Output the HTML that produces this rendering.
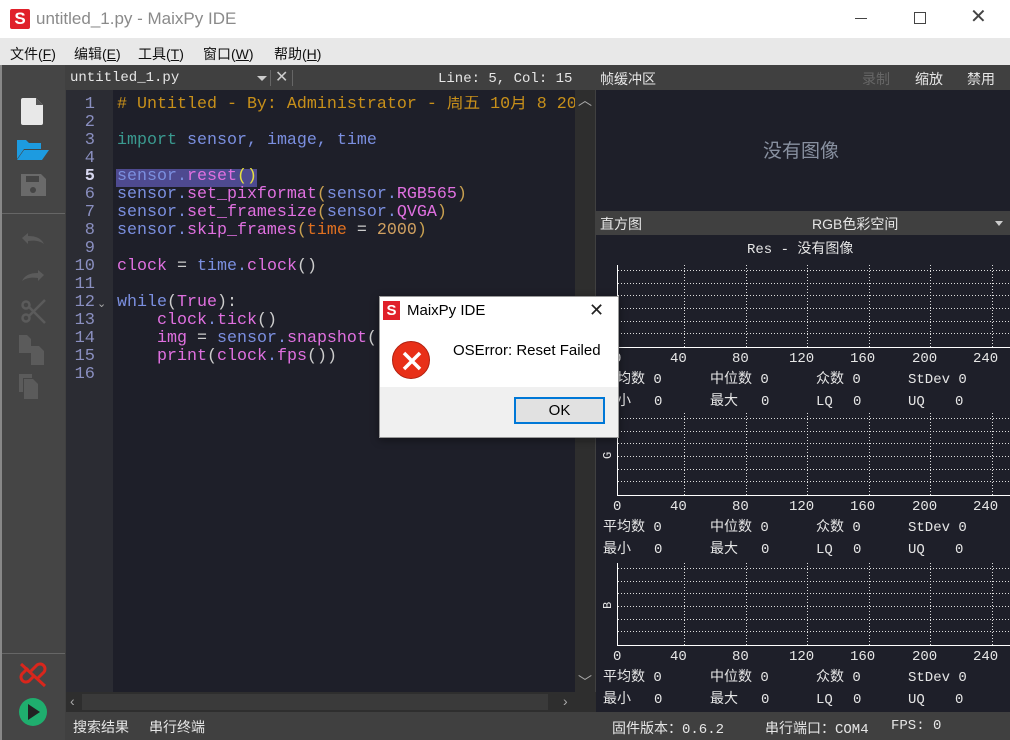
<!DOCTYPE html>
<html><head><meta charset="utf-8"><style>
*{margin:0;padding:0;box-sizing:border-box}
body{width:1010px;height:740px;overflow:hidden;background:#404040;font-family:"Liberation Sans","Noto Sans CJK SC",sans-serif;position:relative}
.a{position:absolute}
.mono{font-family:"Liberation Mono","Noto Sans CJK SC",monospace}
.code div{height:18px;line-height:18px;white-space:pre}
.ln div{height:18px;line-height:18px;text-align:right;padding-right:18px;color:#8a8fc0}
.w{color:#e6e6e6}
</style></head><body>
<!-- title -->
<div class="a" style="left:0;top:0;width:1010px;height:38px;background:#fff"></div>
<div class="a" style="left:10px;top:9px;width:20px;height:20px;background:#e0202a;border-radius:2px;color:#fff;font:bold 17px 'Liberation Sans';text-align:center;line-height:20px">S</div>
<div class="a" style="left:36px;top:9px;font-size:17px;color:#8a8a8a">untitled_1.py - MaixPy IDE</div>
<div class="a" style="left:855px;top:18px;width:12px;height:1px;background:#444"></div>
<div class="a" style="left:914px;top:12px;width:12px;height:12px;border:1px solid #444"></div>
<div class="a" style="left:970px;top:4px;font-size:20px;color:#444">✕</div>
<!-- menu -->
<div class="a" style="left:0;top:38px;width:1010px;height:27px;background:#e8e8e8;font-size:14px;color:#111">
<span class="a" style="left:10px;top:6px">文件(<u>F</u>)</span><span class="a" style="left:74px;top:6px">编辑(<u>E</u>)</span><span class="a" style="left:138px;top:6px">工具(<u>T</u>)</span><span class="a" style="left:203px;top:6px">窗口(<u>W</u>)</span><span class="a" style="left:274px;top:6px">帮助(<u>H</u>)</span></div>
<!-- left toolbar -->
<div class="a" style="left:0;top:65px;width:2px;height:675px;background:#888"></div>
<div class="a" style="left:2px;top:65px;width:63px;height:675px;background:#454545"></div>
<div class="a" style="left:2px;top:213px;width:63px;height:1px;background:#666"></div>
<div class="a" style="left:2px;top:653px;width:63px;height:1px;background:#666"></div>
<svg class="a" style="left:0;top:90px" width="66" height="640" viewBox="0 90 66 640">
<path d="M23 98h13l7 7v18a2 2 0 0 1-2 2H23a2 2 0 0 1-2-2V100a2 2 0 0 1 2-2z" fill="#e8e8e8"/><path d="M36 98v7h7z" fill="#555"/>
<path d="M17 140h9l3 3h12v6H24l-7 10z" fill="#1d9be0"/><path d="M24 150h25l-7 10H17z" fill="#1d9be0"/>
<path d="M21 174h20l5 5v17H21z" fill="#6a6a6a"/><rect x="26" y="176" width="13" height="6" fill="#454545"/><circle cx="33" cy="190" r="3" fill="#454545"/>
<path d="M22 238l6-5v3c8 0 13 2 16 8c-4-3-9-4-16-3v3z" fill="#5b5b5b"/>
<path d="M44 275l-6-5v3c-8 0-13 2-16 8c4-3 9-4 16-3v3z" fill="#5b5b5b"/>
<g stroke="#5b5b5b" stroke-width="2.5" fill="none"><circle cx="26" cy="318" r="3.5"/><circle cx="26" cy="305" r="3.5"/><path d="M29 316l16-16M29 307l16 16"/></g>
<path d="M19 335h8l4 4v14h-12z M31 346h8l5 5v14H31z" fill="#5b5b5b"/>
<path d="M19 374h13v4h-9v14h-4z" fill="#5b5b5b"/><path d="M24 379h9l5 5v15H24z" fill="#5b5b5b"/>
<g stroke="#d9261c" stroke-width="3" fill="none"><path d="M28 668l-6 6a5 5 0 0 0 7 7l6-6M38 678l6-6a5 5 0 0 0-7-7l-6 6M21 664l24 22"/></g>
<circle cx="33" cy="712" r="14" fill="#1fae6e"/><path d="M28 704v16l12-8z" fill="#222"/>
</svg>
<!-- editor tab -->
<div class="a" style="left:66px;top:66px;width:530px;height:24px;background:#404040"></div>
<div class="a mono w" style="left:70px;top:70px;font-size:14px">untitled_1.py</div>
<div class="a" style="left:257px;top:76px;border:5px solid transparent;border-top:5px solid #ccc"></div>
<div class="a" style="left:270px;top:70px;width:1px;height:16px;background:#666"></div>
<div class="a" style="left:275px;top:67px;color:#ccc;font-size:16px">✕</div>
<div class="a" style="left:292px;top:70px;width:1px;height:16px;background:#666"></div>
<div class="a mono w" style="left:438px;top:71px;font-size:14px">Line: 5, Col: 15</div>
<!-- gutter & code -->
<div class="a" style="left:66px;top:90px;width:47px;height:602px;background:#2b2c33"></div>
<div class="a" style="left:113px;top:90px;width:462px;height:602px;background:#1e1f29"></div>
<div class="a" style="left:575px;top:90px;width:20px;height:602px;background:#2e2e2e"></div>
<div class="a" style="left:578px;top:90px;color:#aaa;font-size:14px">︿</div>
<div class="a" style="left:578px;top:672px;color:#aaa;font-size:14px">﹀</div>
<div class="a" style="left:66px;top:692px;width:530px;height:20px;background:#2e2e2e"></div>
<div class="a" style="left:82px;top:694px;width:466px;height:16px;background:#3a3a3a"></div>
<div class="a" style="left:70px;top:693px;color:#aaa;font-size:14px">‹</div>
<div class="a" style="left:563px;top:693px;color:#aaa;font-size:14px">›</div>
<div class="a ln mono" style="left:66px;top:96px;width:47px;font-size:17px">
<div>1</div><div>2</div><div>3</div><div>4</div><div style="color:#d8d8f0;font-weight:bold">5</div><div>6</div><div>7</div><div>8</div><div>9</div><div>10</div><div>11</div><div>12</div><div>13</div><div>14</div><div>15</div><div>16</div></div>
<div class="a" style="left:97px;top:297px;color:#aaa;font-size:11px">⌄</div>
<div class="a" style="left:116px;top:169px;width:141px;height:18px;background:#4e4a90"></div>
<div class="a code mono" style="left:117px;top:96px;width:458px;overflow:hidden;font-size:16.67px;color:#7b8fe0">
<div style="color:#c8901a"># Untitled - By: Administrator - 周五 10月 8 2021</div>
<div> </div>
<div><span style="color:#3a9a90">import</span> sensor, image, time</div>
<div> </div>
<div>sensor.<span style="color:#e070e0">reset</span><span style="color:#e8e040">()</span></div>
<div>sensor.<span style="color:#e070e0">set_pixformat</span><span style="color:#c8a050">(</span>sensor.<span style="color:#e070e0">RGB565</span><span style="color:#c8a050">)</span></div>
<div>sensor.<span style="color:#e070e0">set_framesize</span><span style="color:#c8a050">(</span>sensor.<span style="color:#e070e0">QVGA</span><span style="color:#c8a050">)</span></div>
<div>sensor.<span style="color:#e070e0">skip_frames</span><span style="color:#c8a050">(</span><span style="color:#e07020">time</span> <span style="color:#ccc">=</span> <span style="color:#d0a060">2000</span><span style="color:#c8a050">)</span></div>
<div> </div>
<div><span style="color:#e070e0">clock</span> <span style="color:#ccc">=</span> time.<span style="color:#e070e0">clock</span><span style="color:#ccc">()</span></div>
<div> </div>
<div>while<span style="color:#ccc">(</span><span style="color:#e070e0">True</span><span style="color:#ccc">):</span></div>
<div>    <span style="color:#e070e0">clock</span>.<span style="color:#e070e0">tick</span><span style="color:#ccc">()</span></div>
<div>    <span style="color:#e070e0">img</span> <span style="color:#ccc">=</span> sensor.<span style="color:#e070e0">snapshot</span><span style="color:#ccc">()</span></div>
<div>    <span style="color:#e070e0">print</span><span style="color:#ccc">(</span><span style="color:#e070e0">clock</span>.<span style="color:#e070e0">fps</span><span style="color:#ccc">())</span></div>
</div>
<!-- bottom status -->
<div class="a w" style="left:73px;top:717px;font-size:14px">搜索结果</div>
<div class="a w" style="left:149px;top:717px;font-size:14px">串行终端</div>
<div class="a mono w" style="left:612px;top:718px;font-size:14px">固件版本：0.6.2</div>
<div class="a mono w" style="left:765px;top:718px;font-size:14px">串行端口：COM4</div>
<div class="a mono w" style="left:891px;top:718px;font-size:14px">FPS: 0</div>
<!-- right panel -->
<div class="a" style="left:596px;top:66px;width:414px;height:24px;background:#404040"></div>
<div class="a w" style="left:600px;top:69px;font-size:14px">帧缓冲区</div>
<div class="a" style="left:862px;top:69px;font-size:14px;color:#666">录制</div>
<div class="a w" style="left:915px;top:69px;font-size:14px">缩放</div>
<div class="a w" style="left:967px;top:69px;font-size:14px">禁用</div>
<div class="a" style="left:596px;top:90px;width:414px;height:121px;background:#1e1f29"></div>
<div class="a" style="left:763px;top:136px;font-size:19px;color:#8890a0">没有图像</div>
<div class="a" style="left:596px;top:211px;width:414px;height:24px;background:#404040"></div>
<div class="a w" style="left:600px;top:214px;font-size:14px">直方图</div>
<div class="a w" style="left:812px;top:214px;font-size:14px">RGB色彩空间</div>
<div class="a" style="left:995px;top:221px;border:4px solid transparent;border-top:5px solid #ccc"></div>
<div class="a" style="left:596px;top:235px;width:414px;height:477px;background:#1e1f29"></div>
<div class="a mono w" style="left:747px;top:238px;font-size:14px">Res - 没有图像</div>
<svg class="a" style="left:596px;top:235px" width="414" height="477" viewBox="596 235 414 477" font-family="Liberation Mono,Noto Sans CJK SC,monospace" font-size="14" fill="#e6e6e6">
<defs><g id="h">
<g stroke="#ddd" stroke-dasharray="1 2" stroke-width="1">
<path d="M618 5.5H1010M618 18.5H1010M618 30.5H1010M618 43.5H1010M618 56.5H1010M618 68.5H1010"/>
<path d="M684.5 0V82M746.5 0V82M807.5 0V82M869.5 0V82M930.5 0V82M992.5 0V82"/></g>
<path d="M617.5 0V82.5H1010" stroke="#fff" fill="none"/>
<text y="97" x="613">0</text><text y="97" x="670">40</text><text y="97" x="732">80</text><text y="97" x="789">120</text><text y="97" x="850">160</text><text y="97" x="912">200</text><text y="97" x="973">240</text>
<text y="118" x="603">平均数 0</text><text y="118" x="710">中位数 0</text><text y="118" x="816">众数 0</text><text y="118" x="908">StDev 0</text>
<text y="140" x="603">最小</text><text y="140" x="654">0</text><text y="140" x="710">最大</text><text y="140" x="761">0</text><text y="140" x="816">LQ</text><text y="140" x="853">0</text><text y="140" x="908">UQ</text><text y="140" x="955">0</text>
</g></defs>
<use href="#h" y="265"/><use href="#h" y="413"/><use href="#h" y="563"/>
<text transform="translate(611 459) rotate(-90)" font-size="12">G</text>
<text transform="translate(611 609) rotate(-90)" font-size="12">B</text>
</svg>
<!-- dialog -->
<div class="a" style="left:379px;top:296px;width:240px;height:142px;background:#f0f0f0;border:1px solid #999;box-shadow:0 2px 8px rgba(0,0,0,.4)"></div>
<div class="a" style="left:380px;top:297px;width:238px;height:90px;background:#fff"></div>
<div class="a" style="left:383px;top:301px;width:17px;height:19px;background:#e0202a;color:#fff;font:bold 15px 'Liberation Sans';text-align:center;line-height:19px">S</div>
<div class="a" style="left:407px;top:302px;font-size:15px;color:#000">MaixPy IDE</div>
<div class="a" style="left:589px;top:300px;font-size:18px;color:#222">✕</div>
<div class="a" style="left:392px;top:341px;width:38px;height:38px;border-radius:50%;background:#e83018;border:1px solid #b02010"></div>
<svg class="a" style="left:392px;top:341px" width="40" height="40"><path d="M12 12l16 16M28 12L12 28" stroke="#fff" stroke-width="3.5"/></svg>
<div class="a" style="left:453px;top:342px;font-size:15px;color:#000">OSError: Reset Failed</div>
<div class="a" style="left:514px;top:397px;width:91px;height:27px;border:2px solid #0078d7;background:#e1e1e1;text-align:center;line-height:23px;font-size:15px;color:#000">OK</div>
</body></html>
